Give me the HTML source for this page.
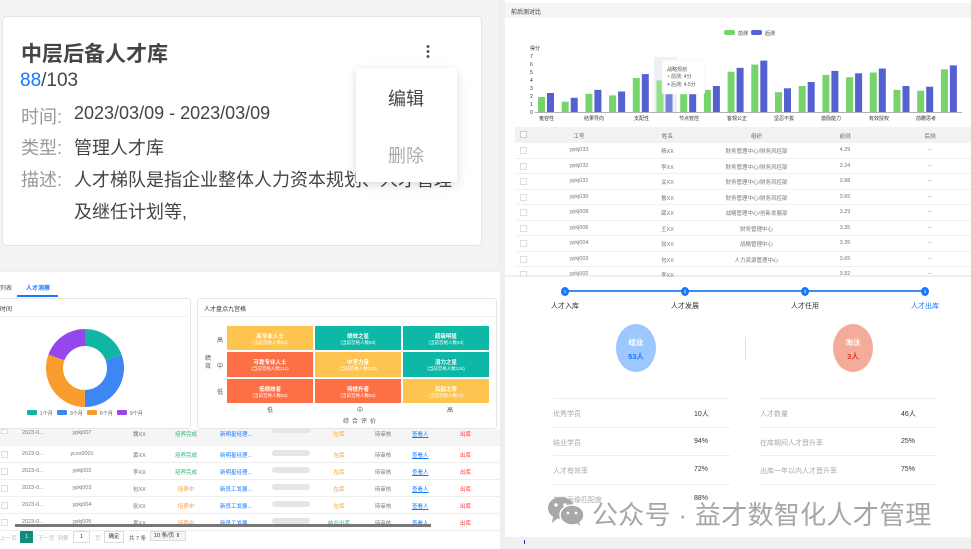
<!DOCTYPE html>
<html><head><meta charset="utf-8"><style>
*{margin:0;padding:0;box-sizing:border-box}
body{width:971px;height:549px;position:relative;overflow:hidden;background:#f0f0f0;font-family:"Liberation Sans","Noto Sans CJK SC",sans-serif;color:#333}
.a{position:absolute;white-space:nowrap}
.c{position:absolute;text-align:center;white-space:nowrap}
</style></head><body>

<!-- top-left -->
<div class="a" style="left:0;top:0;width:498px;height:270px;background:#f3f3f3"></div>
<div class="a" style="left:2px;top:16px;width:480px;height:230px;background:#fff;border:1px solid #e3e3e3;border-radius:5px"></div>
<div class="a" style="left:21px;top:38px;font-size:21px;font-weight:bold;color:#444">中层后备人才库</div>
<div class="a" style="left:20px;top:70px;font-size:19px;color:#444"><span style="color:#1677ff">88</span>/103</div>
<div class="a" style="left:21px;top:103px;font-size:18px;color:#999">时间:</div><div class="a" style="left:74px;top:103px;font-size:18px;color:#444">2023/03/09 - 2023/03/09</div>
<div class="a" style="left:21px;top:134px;font-size:18px;color:#999">类型:</div><div class="a" style="left:74px;top:134px;font-size:18px;color:#444">管理人才库</div>
<div class="a" style="left:21px;top:166px;font-size:18px;color:#999">描述:</div><div class="a" style="left:74px;top:166px;font-size:18px;color:#444">人才梯队是指企业整体人力资本规划、人才管理</div>
<div class="a" style="left:74px;top:198px;font-size:18px;color:#444">及继任计划等,</div>
<div class="a" style="left:426px;top:44px;width:4px;height:14px;background:radial-gradient(circle,#555 1.3px,transparent 1.6px) 0 0/4px 5px"></div>
<div class="a" style="left:356px;top:68px;width:101px;height:114px;background:#fff;box-shadow:0 3px 10px rgba(0,0,0,.15)"></div>
<div class="a" style="left:388px;top:85px;font-size:18px;color:#444">编辑</div>
<div class="a" style="left:388px;top:142px;font-size:18px;color:#aaa">删除</div>

<!-- top-right -->
<div class="a" style="left:505px;top:0;width:466px;height:275px;background:#fff"></div>
<div class="a" style="left:505px;top:3px;width:466px;height:15px;background:#f5f5f5;font-size:6px;padding:4px 6px;color:#333">前后测对比</div>
<svg class="a" style="left:0;top:0" width="971" height="127">
<rect x="724" y="30" width="11" height="5" rx="2" fill="#77d46c"/><text x="738" y="35" font-size="5" fill="#333">前测</text>
<rect x="751" y="30" width="11" height="5" rx="2" fill="#5561d0"/><text x="765" y="35" font-size="5" fill="#333">后测</text>
<text x="530" y="50" font-size="5" fill="#333">得分</text>
<g font-size="5" fill="#333"><text x="530" y="114">0</text><text x="530" y="106">1</text><text x="530" y="98">2</text><text x="530" y="90">3</text><text x="530" y="82">4</text><text x="530" y="74">5</text><text x="530" y="66">6</text><text x="530" y="58">7</text></g>
<rect x="654" y="57" width="23" height="55" fill="#eef0f5"/>
<line x1="535" y1="112.5" x2="962" y2="112.5" stroke="#666" stroke-width=".6"/>
<g fill="#77d46c">
<rect x="538" y="97" width="7" height="15"/><rect x="561.7" y="101.7" width="7" height="10.3"/><rect x="585.4" y="93.8" width="7" height="18.2"/><rect x="609.1" y="95.4" width="7" height="16.6"/><rect x="632.8" y="78" width="7" height="34"/><rect x="656.5" y="80.4" width="7" height="31.6" fill="#93e08a"/><rect x="680.2" y="86.7" width="7" height="25.3"/><rect x="703.9" y="89.9" width="7" height="22.1"/><rect x="727.6" y="71.7" width="7" height="40.3"/><rect x="751.3" y="64.6" width="7" height="47.4"/><rect x="775" y="92.2" width="7" height="19.8"/><rect x="798.7" y="86" width="7" height="26"/><rect x="822.4" y="74.9" width="7" height="37.1"/><rect x="846.1" y="77.2" width="7" height="34.8"/><rect x="869.8" y="72.5" width="7" height="39.5"/><rect x="893.5" y="89.9" width="7" height="22.1"/><rect x="917.2" y="90.7" width="7" height="21.3"/><rect x="940.9" y="69.3" width="7" height="42.7"/></g>
<g fill="#5561d0">
<rect x="547" y="93" width="7" height="19"/><rect x="570.7" y="97.8" width="7" height="14.2"/><rect x="594.4" y="89.9" width="7" height="22.1"/><rect x="618.1" y="91.5" width="7" height="20.5"/><rect x="641.8" y="74.1" width="7" height="37.9"/><rect x="665.5" y="76.4" width="7" height="35.6" fill="#7580dc"/><rect x="689.2" y="84.3" width="7" height="27.7"/><rect x="712.9" y="86" width="7" height="26"/><rect x="736.6" y="67.8" width="7" height="44.2"/><rect x="760.3" y="60.6" width="7" height="51.4"/><rect x="784" y="88.3" width="7" height="23.7"/><rect x="807.7" y="82" width="7" height="30"/><rect x="831.4" y="70.9" width="7" height="41.1"/><rect x="855.1" y="73.3" width="7" height="38.7"/><rect x="878.8" y="68.5" width="7" height="43.5"/><rect x="902.5" y="86" width="7" height="26"/><rect x="926.2" y="86.7" width="7" height="25.3"/><rect x="949.9" y="65.4" width="7" height="46.6"/></g>
<g font-size="5" fill="#333"><text x="539" y="120">雍容性</text><text x="584" y="120">结果导向</text><text x="634" y="120">支配性</text><text x="679" y="120">节点管控</text><text x="727" y="120">客观公正</text><text x="774" y="120">坚忍不拔</text><text x="821" y="120">激励能力</text><text x="869" y="120">有效授权</text><text x="916" y="120">前瞻思考</text></g>
<rect x="662" y="60" width="43" height="34" rx="2" fill="#fff" stroke="#eee" stroke-width=".5"/>
<text x="667" y="71" font-size="5" fill="#555">战略规划</text>
<circle cx="668.5" cy="76.3" r="1" fill="#77d46c"/><text x="671" y="78" font-size="5" fill="#555">前测: 4分</text>
<circle cx="668.5" cy="84.3" r="1" fill="#5561d0"/><text x="671" y="86" font-size="5" fill="#555">后测: 4.5分</text>
</svg>
<div class="a" style="left:515px;top:127px;width:456px;height:148px;font-size:5.5px;color:#666">
<div class="a" style="left:0;top:0;width:456px;height:16px;background:#f2f2f2"></div>
<div class="c" style="left:20px;top:5px;width:88px">工号</div><div class="c" style="left:108px;top:5px;width:89px">姓名</div><div class="c" style="left:197px;top:5px;width:89px">组织</div><div class="c" style="left:286px;top:5px;width:88px">前测</div><div class="c" style="left:374px;top:5px;width:82px">后测</div>
<div class="a" style="left:5px;top:4px;width:7px;height:7px;border:1px solid #ccc;background:#fff"></div>
</div>
<div class="a" style="left:515px;top:143px;width:456px;font-size:5.5px;color:#777">
<div style="position:relative;height:15.5px;border-bottom:1px solid #f0f0f0"><span class="a" style="left:5px;top:4px;width:7px;height:7px;border:1px solid #ddd"></span><span class="c" style="left:20px;top:4px;width:88px">ypkj033</span><span class="c" style="left:108px;top:4px;width:89px">杨XX</span><span class="c" style="left:197px;top:4px;width:89px">财务管理中心/财务风控部</span><span class="c" style="left:286px;top:4px;width:88px">4.29</span><span class="c" style="left:374px;top:4px;width:82px">--</span></div>
<div style="position:relative;height:15.5px;border-bottom:1px solid #f0f0f0"><span class="a" style="left:5px;top:4px;width:7px;height:7px;border:1px solid #ddd"></span><span class="c" style="left:20px;top:4px;width:88px">ypkj032</span><span class="c" style="left:108px;top:4px;width:89px">李XX</span><span class="c" style="left:197px;top:4px;width:89px">财务管理中心/财务风控部</span><span class="c" style="left:286px;top:4px;width:88px">3.24</span><span class="c" style="left:374px;top:4px;width:82px">--</span></div>
<div style="position:relative;height:15.5px;border-bottom:1px solid #f0f0f0"><span class="a" style="left:5px;top:4px;width:7px;height:7px;border:1px solid #ddd"></span><span class="c" style="left:20px;top:4px;width:88px">ypkj031</span><span class="c" style="left:108px;top:4px;width:89px">关XX</span><span class="c" style="left:197px;top:4px;width:89px">财务管理中心/财务风控部</span><span class="c" style="left:286px;top:4px;width:88px">3.88</span><span class="c" style="left:374px;top:4px;width:82px">--</span></div>
<div style="position:relative;height:15.5px;border-bottom:1px solid #f0f0f0"><span class="a" style="left:5px;top:4px;width:7px;height:7px;border:1px solid #ddd"></span><span class="c" style="left:20px;top:4px;width:88px">ypkj030</span><span class="c" style="left:108px;top:4px;width:89px">鲁XX</span><span class="c" style="left:197px;top:4px;width:89px">财务管理中心/财务风控部</span><span class="c" style="left:286px;top:4px;width:88px">3.65</span><span class="c" style="left:374px;top:4px;width:82px">--</span></div>
<div style="position:relative;height:15.5px;border-bottom:1px solid #f0f0f0"><span class="a" style="left:5px;top:4px;width:7px;height:7px;border:1px solid #ddd"></span><span class="c" style="left:20px;top:4px;width:88px">ypkj008</span><span class="c" style="left:108px;top:4px;width:89px">薛XX</span><span class="c" style="left:197px;top:4px;width:89px">战略管理中心/创新发展部</span><span class="c" style="left:286px;top:4px;width:88px">3.29</span><span class="c" style="left:374px;top:4px;width:82px">--</span></div>
<div style="position:relative;height:15.5px;border-bottom:1px solid #f0f0f0"><span class="a" style="left:5px;top:4px;width:7px;height:7px;border:1px solid #ddd"></span><span class="c" style="left:20px;top:4px;width:88px">ypkj006</span><span class="c" style="left:108px;top:4px;width:89px">王XX</span><span class="c" style="left:197px;top:4px;width:89px">财务管理中心</span><span class="c" style="left:286px;top:4px;width:88px">3.35</span><span class="c" style="left:374px;top:4px;width:82px">--</span></div>
<div style="position:relative;height:15.5px;border-bottom:1px solid #f0f0f0"><span class="a" style="left:5px;top:4px;width:7px;height:7px;border:1px solid #ddd"></span><span class="c" style="left:20px;top:4px;width:88px">ypkj004</span><span class="c" style="left:108px;top:4px;width:89px">张XX</span><span class="c" style="left:197px;top:4px;width:89px">战略管理中心</span><span class="c" style="left:286px;top:4px;width:88px">3.35</span><span class="c" style="left:374px;top:4px;width:82px">--</span></div>
<div style="position:relative;height:15.5px;border-bottom:1px solid #f0f0f0"><span class="a" style="left:5px;top:4px;width:7px;height:7px;border:1px solid #ddd"></span><span class="c" style="left:20px;top:4px;width:88px">ypkj003</span><span class="c" style="left:108px;top:4px;width:89px">包XX</span><span class="c" style="left:197px;top:4px;width:89px">人力资源管理中心</span><span class="c" style="left:286px;top:4px;width:88px">3.65</span><span class="c" style="left:374px;top:4px;width:82px">--</span></div>
<div style="position:relative;height:15.5px"><span class="a" style="left:5px;top:4px;width:7px;height:7px;border:1px solid #ddd"></span><span class="c" style="left:20px;top:4px;width:88px">ypkj002</span><span class="c" style="left:108px;top:4px;width:89px">李XX</span><span class="c" style="left:286px;top:4px;width:88px">3.82</span><span class="c" style="left:374px;top:4px;width:82px">--</span></div>
</div>

<!-- middle-left -->
<div class="a" style="left:0;top:272px;width:500px;height:277px;background:#fff"></div>
<div class="a" style="left:0;top:283px;font-size:6px;color:#555">列表</div>
<div class="a" style="left:26px;top:283px;font-size:6px;color:#1677ff;font-weight:bold">人才洞察</div>
<div class="a" style="left:17px;top:295px;width:41px;height:2px;background:#1677ff"></div>
<div class="a" style="left:-3px;top:298px;width:194px;height:131px;border:1px solid #e6e6e6;border-radius:3px;background:#fff"></div>
<div class="a" style="left:0;top:304px;font-size:6px">时间</div>
<div class="a" style="left:0;top:316px;width:191px;height:1px;background:#f2f2f2"></div>
<svg class="a" style="left:0;top:320px" width="191" height="100">
<g transform="rotate(-90 85 48)" fill="none" stroke-width="17">
<circle cx="85" cy="48" r="30.5" stroke="#12b5a3" stroke-dasharray="37.3 200"/>
<circle cx="85" cy="48" r="30.5" stroke="#3d86f4" stroke-dasharray="0 37.3 58.5 200"/>
<circle cx="85" cy="48" r="30.5" stroke="#f89d2d" stroke-dasharray="0 95.8 58.5 200"/>
<circle cx="85" cy="48" r="30.5" stroke="#9546ec" stroke-dasharray="0 154.3 37.3 200"/>
</g>
<g font-size="5" fill="#555">
<rect x="27" y="90" width="10" height="5" rx="1" fill="#12b5a3"/><text x="40" y="95">1个月</text>
<rect x="57" y="90" width="10" height="5" rx="1" fill="#3d86f4"/><text x="70" y="95">3个月</text>
<rect x="87" y="90" width="10" height="5" rx="1" fill="#f89d2d"/><text x="100" y="95">6个月</text>
<rect x="117" y="90" width="10" height="5" rx="1" fill="#9546ec"/><text x="130" y="95">9个月</text></g>
</svg>
<div class="a" style="left:197px;top:298px;width:300px;height:131px;border:1px solid #e6e6e6;border-radius:3px;background:#fff"></div>
<div class="a" style="left:204px;top:304px;font-size:6px">人才盘点九宫格</div>
<div class="a" style="left:197px;top:316px;width:300px;height:1px;background:#f2f2f2"></div>
<div class="a" style="left:226px;top:325px;width:264px;height:79px;display:grid;grid-template-columns:88px 88px 88px;grid-template-rows:26.3px 26.3px 26.3px;color:#fff;text-align:center;font-size:5.5px;font-weight:bold">
<div style="background:#fdc54f;border:.5px solid #fff;padding-top:6px">高专业人士<br><span style="font-weight:normal;font-size:4.5px">(当前宫格人数52)</span></div>
<div style="background:#0db8a6;border:.5px solid #fff;padding-top:6px">绩效之星<br><span style="font-weight:normal;font-size:4.5px">(当前宫格人数63)</span></div>
<div style="background:#0db8a6;border:.5px solid #fff;padding-top:6px">超级明星<br><span style="font-weight:normal;font-size:4.5px">(当前宫格人数43)</span></div>
<div style="background:#fd7045;border:.5px solid #fff;padding-top:6px">可靠专业人士<br><span style="font-weight:normal;font-size:4.5px">(当前宫格人数112)</span></div>
<div style="background:#fdc54f;border:.5px solid #fff;padding-top:6px">中坚力量<br><span style="font-weight:normal;font-size:4.5px">(当前宫格人数153)</span></div>
<div style="background:#0db8a6;border:.5px solid #fff;padding-top:6px">潜力之星<br><span style="font-weight:normal;font-size:4.5px">(当前宫格人数124)</span></div>
<div style="background:#fd7045;border:.5px solid #fff;padding-top:6px">低绩效者<br><span style="font-weight:normal;font-size:4.5px">(当前宫格人数52)</span></div>
<div style="background:#fd7045;border:.5px solid #fff;padding-top:6px">待提升者<br><span style="font-weight:normal;font-size:4.5px">(当前宫格人数62)</span></div>
<div style="background:#fdc54f;border:.5px solid #fff;padding-top:6px">后起之秀<br><span style="font-weight:normal;font-size:4.5px">(当前宫格人数72)</span></div>
</div>
<div class="a" style="left:217px;top:335px;font-size:6px;color:#555">高</div>
<div class="a" style="left:217px;top:361px;font-size:6px;color:#555">中</div>
<div class="a" style="left:217px;top:387px;font-size:6px;color:#555">低</div>
<div class="a" style="left:205px;top:355px;font-size:6px;color:#555;line-height:8px">绩<br>效</div>
<div class="a" style="left:267px;top:405px;font-size:6px;color:#555">低</div>
<div class="a" style="left:357px;top:405px;font-size:6px;color:#555">中</div>
<div class="a" style="left:447px;top:405px;font-size:6px;color:#555">高</div>
<div class="a" style="left:343px;top:416px;font-size:6px;color:#555;letter-spacing:3px">综合评价</div>

<!-- bottom-left table -->
<div class="a" style="left:0;top:429px;width:500px;font-size:5.5px;color:#777">
<div style="position:relative;height:17px;background:#f5f5f5;border-bottom:1px solid #eee"><span class="a" style="left:1px;top:0;width:7px;height:5px;border:1px solid #ddd;background:#fff"></span><span class="a" style="left:22px;top:1px">2023-0...</span><span class="c" style="left:55px;top:1px;width:54px">ypkj007</span><span class="a" style="left:133px;top:1px">魏XX</span><span class="c" style="left:160px;top:1px;width:52px;color:#2bb673">培养完成</span><span class="a" style="left:220px;top:1px;color:#1677ff">新明星经理...</span><span class="a" style="left:272px;top:-1px;width:38px;height:5px;background:#e5e5e5;border-radius:3px"></span><span class="c" style="left:318px;top:1px;width:42px;color:#f89d2d">在库</span><span class="c" style="left:361px;top:1px;width:44px">待审核</span><span class="a" style="left:412px;top:1px;color:#1677ff;text-decoration:underline">查看人</span><span class="a" style="left:460px;top:1px;color:#f33">出库</span></div>
<div style="position:relative;height:17px;border-bottom:1px solid #eee"><span class="a" style="left:1px;top:5px;width:7px;height:7px;border:1px solid #ddd"></span><span class="a" style="left:22px;top:5px">2023-0...</span><span class="c" style="left:55px;top:5px;width:54px">yczx0001</span><span class="a" style="left:133px;top:5px">黄XX</span><span class="c" style="left:160px;top:5px;width:52px;color:#2bb673">培养完成</span><span class="a" style="left:220px;top:5px;color:#1677ff">新明星经理...</span><span class="a" style="left:272px;top:4px;width:38px;height:6px;background:#e5e5e5;border-radius:3px"></span><span class="c" style="left:318px;top:5px;width:42px;color:#f89d2d">在库</span><span class="c" style="left:361px;top:5px;width:44px">待审核</span><span class="a" style="left:412px;top:5px;color:#1677ff;text-decoration:underline">查看人</span><span class="a" style="left:460px;top:5px;color:#f33">出库</span></div>
<div style="position:relative;height:17px;border-bottom:1px solid #eee"><span class="a" style="left:1px;top:5px;width:7px;height:7px;border:1px solid #ddd"></span><span class="a" style="left:22px;top:5px">2023-0...</span><span class="c" style="left:55px;top:5px;width:54px">ypkj002</span><span class="a" style="left:133px;top:5px">李XX</span><span class="c" style="left:160px;top:5px;width:52px;color:#2bb673">培养完成</span><span class="a" style="left:220px;top:5px;color:#1677ff">新明星经理...</span><span class="a" style="left:272px;top:4px;width:38px;height:6px;background:#e5e5e5;border-radius:3px"></span><span class="c" style="left:318px;top:5px;width:42px;color:#f89d2d">在库</span><span class="c" style="left:361px;top:5px;width:44px">待审核</span><span class="a" style="left:412px;top:5px;color:#1677ff;text-decoration:underline">查看人</span><span class="a" style="left:460px;top:5px;color:#f33">出库</span></div>
<div style="position:relative;height:17px;border-bottom:1px solid #eee"><span class="a" style="left:1px;top:5px;width:7px;height:7px;border:1px solid #ddd"></span><span class="a" style="left:22px;top:5px">2023-0...</span><span class="c" style="left:55px;top:5px;width:54px">ypkj003</span><span class="a" style="left:133px;top:5px">包XX</span><span class="c" style="left:160px;top:5px;width:52px;color:#f89d2d">培养中</span><span class="a" style="left:220px;top:5px;color:#1677ff">新员工发展...</span><span class="a" style="left:272px;top:4px;width:38px;height:6px;background:#e5e5e5;border-radius:3px"></span><span class="c" style="left:318px;top:5px;width:42px;color:#f89d2d">在库</span><span class="c" style="left:361px;top:5px;width:44px">待审核</span><span class="a" style="left:412px;top:5px;color:#1677ff;text-decoration:underline">查看人</span><span class="a" style="left:460px;top:5px;color:#f33">出库</span></div>
<div style="position:relative;height:17px;border-bottom:1px solid #eee"><span class="a" style="left:1px;top:5px;width:7px;height:7px;border:1px solid #ddd"></span><span class="a" style="left:22px;top:5px">2023-0...</span><span class="c" style="left:55px;top:5px;width:54px">ypkj004</span><span class="a" style="left:133px;top:5px">张XX</span><span class="c" style="left:160px;top:5px;width:52px;color:#f89d2d">培养中</span><span class="a" style="left:220px;top:5px;color:#1677ff">新员工发展...</span><span class="a" style="left:272px;top:4px;width:38px;height:6px;background:#e5e5e5;border-radius:3px"></span><span class="c" style="left:318px;top:5px;width:42px;color:#f89d2d">在库</span><span class="c" style="left:361px;top:5px;width:44px">待审核</span><span class="a" style="left:412px;top:5px;color:#1677ff;text-decoration:underline">查看人</span><span class="a" style="left:460px;top:5px;color:#f33">出库</span></div>
<div style="position:relative;height:17px;border-bottom:1px solid #eee"><span class="a" style="left:1px;top:5px;width:7px;height:7px;border:1px solid #ddd"></span><span class="a" style="left:22px;top:5px">2023-0...</span><span class="c" style="left:55px;top:5px;width:54px">ypkj005</span><span class="a" style="left:133px;top:5px">夏XX</span><span class="c" style="left:160px;top:5px;width:52px;color:#f89d2d">培养中</span><span class="a" style="left:220px;top:5px;color:#1677ff">新员工发展...</span><span class="a" style="left:272px;top:4px;width:38px;height:6px;background:#e5e5e5;border-radius:3px"></span><span class="c" style="left:318px;top:5px;width:42px;color:#2bb673">结业出库</span><span class="c" style="left:361px;top:5px;width:44px">待审核</span><span class="a" style="left:412px;top:5px;color:#1677ff;text-decoration:underline">查看人</span><span class="a" style="left:460px;top:5px;color:#f33">出库</span></div>
</div>
<div class="a" style="left:15px;top:524px;width:416px;height:3px;background:#777"></div>
<div class="a" style="left:0;top:534px;font-size:5.5px;color:#bbb">上一页</div>
<div class="a" style="left:20px;top:531px;width:13px;height:12px;background:#0e8f7e;color:#fff;font-size:5.5px;text-align:center;line-height:12px">1</div>
<div class="a" style="left:38px;top:534px;font-size:5.5px;color:#bbb">下一页 &nbsp;到第</div>
<div class="a" style="left:73px;top:531px;width:17px;height:12px;border:1px solid #ddd;font-size:5.5px;text-align:center;line-height:10px">1</div>
<div class="a" style="left:95px;top:534px;font-size:5.5px;color:#bbb">页</div>
<div class="a" style="left:104px;top:531px;width:20px;height:12px;border:1px solid #ddd;font-size:5.5px;text-align:center;line-height:10px">确定</div>
<div class="a" style="left:129px;top:534px;font-size:5.5px;color:#555">共 7 条</div>
<div class="a" style="left:150px;top:531px;width:36px;height:10px;border:1px solid #ddd;font-size:5.5px;padding-left:3px;line-height:8px;background:#f5f5f5">10 条/页 ⇕</div>

<!-- bottom-right -->
<div class="a" style="left:500px;top:275px;width:5px;height:274px;background:#eee"></div>
<div class="a" style="left:505px;top:277px;width:466px;height:260px;background:#fff"></div>
<div class="a" style="left:565px;top:290px;width:360px;height:2px;background:#3d8bf4"></div>
<div class="a" style="left:561px;top:287px;width:8px;height:9px;border-radius:50%;background:#1677ff;color:#fff;font-size:4.5px;text-align:center;line-height:9px">1</div>
<div class="a" style="left:681px;top:287px;width:8px;height:9px;border-radius:50%;background:#1677ff;color:#fff;font-size:4.5px;text-align:center;line-height:9px">2</div>
<div class="a" style="left:801px;top:287px;width:8px;height:9px;border-radius:50%;background:#1677ff;color:#fff;font-size:4.5px;text-align:center;line-height:9px">3</div>
<div class="a" style="left:921px;top:287px;width:8px;height:9px;border-radius:50%;background:#1677ff;color:#fff;font-size:4.5px;text-align:center;line-height:9px">4</div>
<div class="a" style="left:551px;top:301px;font-size:7px">人才入库</div>
<div class="a" style="left:671px;top:301px;font-size:7px">人才发展</div>
<div class="a" style="left:791px;top:301px;font-size:7px">人才任用</div>
<div class="a" style="left:911px;top:301px;font-size:7px;color:#1677ff">人才出库</div>
<div class="a" style="left:616px;top:324px;width:40px;height:48px;border-radius:50%;background:#9cc8ff;text-align:center;font-size:7.5px;font-weight:bold;color:#fff;padding-top:12px;line-height:14px">结业<br><span style="color:#1677ff">53人</span></div>
<div class="a" style="left:833px;top:324px;width:40px;height:48px;border-radius:50%;background:#f4ab99;text-align:center;font-size:7.5px;font-weight:bold;color:#fff;padding-top:12px;line-height:14px">淘汰<br><span style="color:#e5341f">3人</span></div>
<div class="a" style="left:745px;top:337px;width:1px;height:23px;background:#ddd"></div>
<div class="a" style="left:553px;top:398px;width:177px;font-size:7px">
<div style="height:28.6px;border-top:1px solid #eee;position:relative"><span class="a" style="left:0;top:10px;color:#aaa">优秀学员</span><span class="a" style="left:141px;top:10px">10人</span></div>
<div style="height:28.6px;border-top:1px solid #eee;position:relative"><span class="a" style="left:0;top:10px;color:#aaa">结业学员</span><span class="a" style="left:141px;top:10px">94%</span></div>
<div style="height:28.6px;border-top:1px solid #eee;position:relative"><span class="a" style="left:0;top:10px;color:#aaa">人才有效率</span><span class="a" style="left:141px;top:10px">72%</span></div>
<div style="height:28.6px;border-top:1px solid #eee;position:relative"><span class="a" style="left:0;top:10px;color:#aaa">岗位画像匹配度</span><span class="a" style="left:141px;top:10px">88%</span></div>
</div>
<div class="a" style="left:760px;top:398px;width:177px;font-size:7px">
<div style="height:28.6px;border-top:1px solid #eee;position:relative"><span class="a" style="left:0;top:10px;color:#aaa">人才数量</span><span class="a" style="left:141px;top:10px">46人</span></div>
<div style="height:28.6px;border-top:1px solid #eee;position:relative"><span class="a" style="left:0;top:10px;color:#aaa">在库期间人才晋升率</span><span class="a" style="left:141px;top:10px">25%</span></div>
<div style="height:28.6px;border-top:1px solid #eee;position:relative"><span class="a" style="left:0;top:10px;color:#aaa">出库一年以内人才晋升率</span><span class="a" style="left:141px;top:10px">75%</span></div>
<div style="height:28.6px;border-top:1px solid #eee"></div>
</div>
<div class="a" style="left:505px;top:537px;width:466px;height:12px;background:#f0f0f0"></div>
<div class="a" style="left:524px;top:540px;width:1px;height:4px;background:#1a3a9a"></div>

<!-- watermark -->
<svg class="a" style="left:547px;top:495px" width="40" height="32">
<ellipse cx="14" cy="13" rx="13" ry="11" fill="#a8a8a8"/>
<path d="M6 22 L5 28 L11 23Z" fill="#a8a8a8"/>
<ellipse cx="25" cy="20" rx="12" ry="10" fill="#a8a8a8" stroke="#fff" stroke-width="1.5"/>
<path d="M30 28 L33 31 L32 26Z" fill="#a8a8a8"/>
<circle cx="9" cy="10" r="1.7" fill="#fff"/><circle cx="18" cy="10" r="1.7" fill="#fff"/>
<circle cx="21" cy="18" r="1.4" fill="#fff"/><circle cx="29" cy="18" r="1.4" fill="#fff"/>
</svg>
<div class="a" style="left:592px;top:495px;font-size:26px;color:rgba(150,150,150,.85);letter-spacing:0.3px">公众号 · 益才数智化人才管理</div>
</body></html>
